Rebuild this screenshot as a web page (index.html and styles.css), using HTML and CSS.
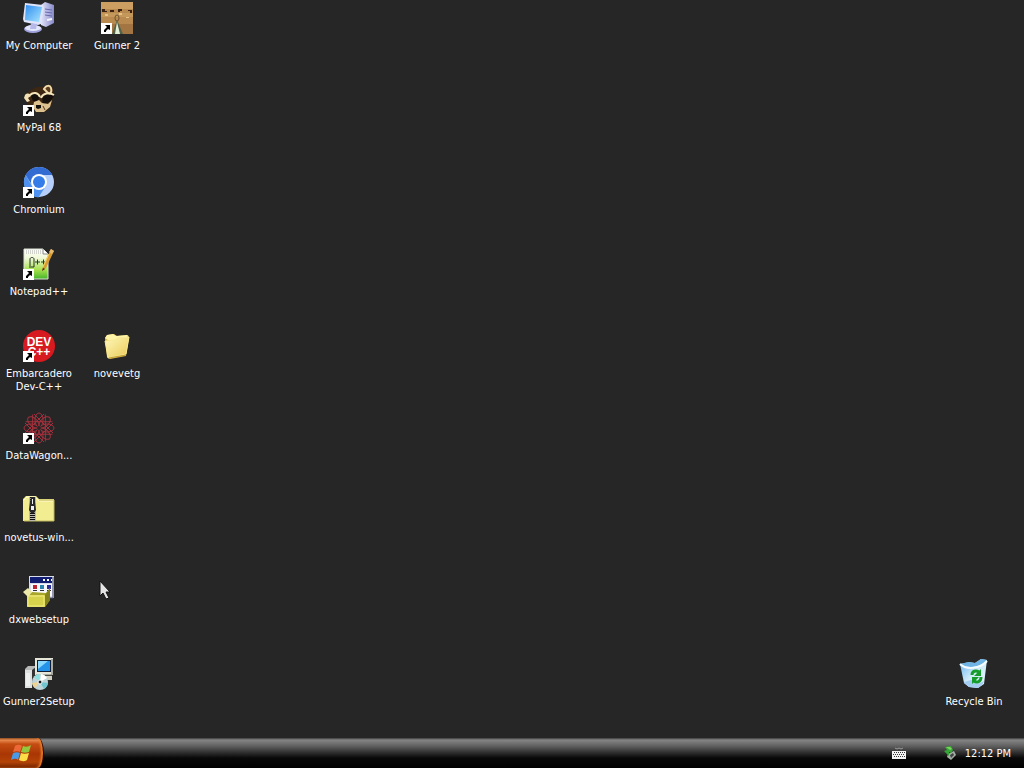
FILE: index.html
```html
<!DOCTYPE html>
<html lang="en">
<head>
	<meta charset="utf-8">
	<title>Desktop</title>
	<link rel="stylesheet" href="styles.css">
</head>
<body>
	<svg class="defs" width="0" height="0">
		<defs>
			<linearGradient id="screen" x1="0" y1="0" x2="1" y2="1">
				<stop offset="0" stop-color="#2f8df0"/>
				<stop offset="1" stop-color="#a9e6ff"/>
			</linearGradient>
			<linearGradient id="tower" x1="0" y1="0" x2="1" y2="0">
				<stop offset="0" stop-color="#e2e4fa"/>
				<stop offset="1" stop-color="#8688c8"/>
			</linearGradient>
			<linearGradient id="paper" x1="0" y1="0" x2="0" y2="1">
				<stop offset="0" stop-color="#ffffff"/>
				<stop offset="0.3" stop-color="#f1f9d8"/>
				<stop offset="0.7" stop-color="#a4e04a"/>
				<stop offset="1" stop-color="#44b52c"/>
			</linearGradient>
			<linearGradient id="manila" x1="0" y1="0" x2="1" y2="1">
				<stop offset="0" stop-color="#fff9bd"/>
				<stop offset="1" stop-color="#e9c953"/>
			</linearGradient>
			<linearGradient id="glass" x1="0" y1="0" x2="1" y2="1">
				<stop offset="0" stop-color="#5eaeee"/>
				<stop offset="0.5" stop-color="#cfeafa"/>
				<stop offset="1" stop-color="#e8f8ff"/>
			</linearGradient>
			<g id="shortcut">
				<rect x="0" y="21" width="11" height="11" fill="#fff"/>
				<path d="M4 23h5v5l-2-1-2 2v1H3v-2l3-3z" fill="#000"/>
			</g>
		</defs>
	</svg>

	<main class="desktop">
		<a href="#" class="icon">
			<svg viewBox="0 0 32 32">
				<path d="M18 3l4-3 9 3v18l-8 4-5-2z" fill="url(#tower)"/>
				<path d="M22 7l7 1M22 10l7 1M22 13l7 1" stroke="#6669ad"/>
				<path d="M24 18l5-1" stroke="#f5f6ff" stroke-width="2"/>
				<path d="M2 1l18 2 1 3-3 16-3 1L1 20 0 17z" fill="#dfe4fb"/>
				<path d="M3 3l16 2-3 15L2 18z" fill="url(#screen)"/>
				<ellipse cx="10" cy="27" rx="9" ry="4" fill="#9ea1dc"/>
				<ellipse cx="10" cy="26" rx="8" ry="3" fill="#e4e7fc"/>
				<path d="M8 21l6 1-1 5H7z" fill="#b6b9e8"/>
			</svg>
			<span>My Computer</span>
		</a>
		<a href="#" class="icon col2 row1">
			<svg viewBox="0 0 32 32">
				<rect width="32" height="32" fill="#b98a50"/>
				<path d="M0 0h32v7H0z" fill="#cc9e61"/>
				<path d="M0 11h32v4H0z" fill="#c4975b"/>
				<path d="M0 22h32v10H0z" fill="#a27543"/>
				<path d="M1 7h3v2h2v1H1zM9 8h4v2H9zM17 7h4v2h-2v1h-2zM27 8h4v3h-2V9h-2z" fill="#3a2013"/>
				<path d="M4 12h3v2H4zM18 11h3v2h-3zM25 15h3v1h-3z" fill="#e8c184"/>
				<ellipse cx="16" cy="16" rx="2" ry="3" fill="none" stroke="#705330"/>
				<path d="M16 18l6 14H11z" fill="#536349"/>
				<path d="M16 20l3 12h-5z" fill="#e5f0da"/>
				<use href="#shortcut"/>
			</svg>
			<span>Gunner 2</span>
		</a>
		<a href="#" class="icon">
			<svg viewBox="0 0 32 32">
				<path d="M2 12l4-5 8-4 8 0 5-2 3 3v8l-1 9-6 6-8 2-10-8z" fill="#3d2612"/>
				<path d="M21 5c2-4 6-4 7-1 1 3 0 5-2 6-2-2-3-3-5-5z" fill="#5a3d20" stroke="#f0daa9" stroke-width="2"/>
				<path d="M2 11c2-2 5-2 6 1l-3 2 2 3-3 1-3-4z" fill="#f3e0b4"/>
				<path d="M8 12c2-3 6-3 8 1l-1 5-5-1z" fill="#15100b"/>
				<path d="M7 11c3-3 8-3 10 2" fill="none" stroke="#f6e4ba" stroke-width="2"/>
				<path d="M19 13c4-4 8-3 12-1l-4 6-7 2z" fill="#15100b"/>
				<path d="M18 14c2-5 8-6 13-3" fill="none" stroke="#f6e4ba" stroke-width="2"/>
				<path d="M11 18l5-2 3 3 6 1 4-4-2 7-6 5h-8l-3-5z" fill="#dcc08e"/>
				<path d="M13 21h5v3l-3 1-2-1z" fill="#17110c"/>
				<path d="M20 22l2 4" stroke="#5b3d20"/>
				<use href="#shortcut"/>
			</svg>
			<span>MyPal 68</span>
		</a>
		<a href="#" class="icon">
			<svg viewBox="0 0 32 32">
				<circle cx="16" cy="16" r="15" fill="#b7d0fb"/>
				<path d="M2.5 9A15.5 15.5 0 0 1 29.5 9H16l-7 10z" fill="#326bd1"/>
				<path d="M2.5 9l7 12 12 1-6 9.5A15.5 15.5 0 0 1 2.5 9z" fill="#4e91ee"/>
				<circle cx="16" cy="16" r="8" fill="#fff"/>
				<circle cx="16" cy="16" r="6" fill="#347ce8"/>
				<use href="#shortcut"/>
			</svg>
			<span>Chromium</span>
		</a>
		<a href="#" class="icon">
			<svg viewBox="0 0 32 32">
				<path d="M1 1h19l5 5v25H1z" fill="url(#paper)" stroke="#dce2d4"/>
				<path d="M20 1v5h5" fill="#fff" stroke="#888"/>
				<path d="M3 3h15M3 5h15" stroke="#aaa" stroke-dasharray="1 1"/>
				<path d="M7 20v-9c0-2 4-2 4 0v8H8" fill="none" stroke="#26332a"/>
				<path d="M12 14h5M14.5 11.500v5M18 14h5M20.500 11.500v5" stroke="#24422b"/>
				<path d="M28 1l3 2-8 17-4 3 1-5z" fill="#d99b32"/>
				<path d="M28 1l3 2-2 3-3-2z" fill="#e4b86d"/>
				<path d="M26 6l-6 13" stroke="#f7d260"/>
				<path d="M19 23l1-3 2 1z" fill="#302b1c"/>
				<use href="#shortcut"/>
			</svg>
			<span>Notepad++</span>
		</a>
		<a href="#" class="icon">
			<svg viewBox="0 0 32 32">
				<circle cx="16" cy="16" r="16" fill="#d71920"/>
				<text class="logo-text" text-anchor="middle"><tspan x="16" y="16">DEV</tspan><tspan x="16" y="26">C++</tspan></text>
				<use href="#shortcut"/>
			</svg>
			<span>Embarcadero Dev-C++</span>
		</a>
		<a href="#" class="icon col2 row5">
			<svg viewBox="0 0 32 32">
				<path d="M4 8l2-3 7-1 3 2 11-1 1 3-3 18-16 3-3-2z" fill="#ddba4b"/>
				<path d="M4 8l2-3 6-1 3 2 11-1 1 3-17 4z" fill="#fff4a7"/>
				<path d="M4 11l10-1 3-2 11-1-3 17-18 4z" fill="url(#manila)" stroke="#f7e991"/>
				<path d="M8 28l17-3" stroke="#c19e34"/>
			</svg>
			<span>novevetg</span>
		</a>
		<a href="#" class="icon">
			<svg viewBox="0 0 32 32">
				<g fill="none" stroke="#a3303d">
					<g id="petals">
						<ellipse cx="16" cy="8" rx="4" ry="7"/>
						<ellipse cx="16" cy="24" rx="4" ry="7"/>
						<path d="M11 2l10 10M21 2L11 12M11 30l10-10M21 30L11 20"/>
					</g>
					<use href="#petals" transform="rotate(45 16 16)"/>
					<use href="#petals" transform="rotate(90 16 16)"/>
					<use href="#petals" transform="rotate(135 16 16)"/>
				</g>
				<circle cx="16" cy="16" r="2" fill="#262626"/>
				<use href="#shortcut"/>
			</svg>
			<span>DataWagon...</span>
		</a>
		<a href="#" class="icon">
			<svg viewBox="0 0 32 32">
				<path d="M0 5l3-3h10l3 3h15v22H0z" fill="#f3ed91"/>
				<path d="M1 6l3-3h8l4 4h14" fill="none" stroke="#fffbd5"/>
				<path d="M16 6h15v21H1" fill="none" stroke="#c2b85c"/>
				<path d="M6 3h7v24H6z" fill="#b9b9b0"/>
				<path d="M9.500 3v24" stroke="#111" stroke-width="5" stroke-dasharray="1 1"/>
				<path d="M8 3h4v5l1 8-2 3H8l-2-3 1-8z" fill="#26282a"/>
				<path d="M9 5h1v5H9zM8 12h3v4H8z" fill="#eee"/>
			</svg>
			<span>novetus-win...</span>
		</a>
		<a href="#" class="icon">
			<svg viewBox="0 0 32 32">
				<path d="M6 0h25v22H6z" fill="#d9dcea"/>
				<path d="M30 1v21H18" fill="none" stroke="#485171"/>
				<path d="M7 1h22v6H7z" fill="#101d72"/>
				<path d="M20 3h2v2h-2zM24 3h2v2h-2zM28 3h1v2h-1z" fill="#fff"/>
				<path d="M8 8h21v12H8z" fill="#f7f8ff"/>
				<path d="M10 9h4v4h-4z" fill="#ba2431"/>
				<path d="M17 9h4v4h-4z" fill="#2b83ae"/>
				<path d="M24 9h4v4h-4z" fill="#2b2d95"/>
				<path d="M10 14.500h4M17 14.500h4M24 14.500h4" stroke="#333"/>
				<path d="M4 19l5-3 14 1 4-5v12l-5 7H4z" fill="#a9a72b"/>
				<path d="M4 19h18v12H4z" fill="#d6d24c"/>
				<path d="M5 20h16v10H5z" fill="none" stroke="#f1ed87"/>
				<path d="M22 19l5-7v12l-5 7z" fill="#85831d"/>
				<path d="M0 16l5-4 4 4-4 5z" fill="#ece9a8"/>
			</svg>
			<span>dxwebsetup</span>
		</a>
		<a href="#" class="icon">
			<svg viewBox="0 0 32 32">
				<path d="M2 11l3-3h8v22H2z" fill="#b7b9b9"/>
				<path d="M2 12h7v18H2z" fill="#dedfdf"/>
				<path d="M9 12l4-3v21H9z" fill="#333"/>
				<path d="M4 15v13M6 15v13" stroke="#fff"/>
				<path d="M12 0h18v17H12z" fill="#e5e5d8"/>
				<path d="M29 1v16H13" fill="none" stroke="#707069"/>
				<path d="M14 2h14v12H14z" fill="#101d35"/>
				<path d="M15 3h12v10H15z" fill="#2493e9"/>
				<path d="M15 3h10l-10 8z" fill="#8ad8ff"/>
				<path d="M14 18h15v4H14z" fill="#d2d0c2"/>
				<circle cx="17" cy="24" r="8" fill="#bfd4d8"/>
				<path d="M17 24l-6-5a8 8 0 0 1 5-3z" fill="#8de0df"/>
				<path d="M17 24l1-8a8 8 0 0 1 6 4z" fill="#fff"/>
				<path d="M17 24l8 1a8 8 0 0 1-4 6z" fill="#6fc4cf"/>
				<path d="M17 24l-5 6a8 8 0 0 1-3-5z" fill="#edd491"/>
				<circle cx="17" cy="24" r="2" fill="#171717" stroke="#fff"/>
			</svg>
			<span>Gunner2Setup</span>
		</a>
		<a href="#" class="icon bin">
			<svg viewBox="0 0 32 32">
				<path d="M2 6l9-2 6 1 6-4 6 1-3 24-6 4-9-1-5-4z" fill="url(#glass)"/>
				<path d="M2 6c6 5 20 4 27-4l-6-1-6 4-6-1z" fill="#6fb4e4"/>
				<path d="M2 6c6 6 20 5 27-3" fill="none" stroke="#f4fcff" stroke-width="2"/>
				<path d="M6 24l7-2 7 4 6-3-1 3-5 4-9-1-5-4z" fill="#a4cdf1"/>
				<g fill="none" stroke="#159c2b" stroke-width="3">
					<path d="M14 17c0-4 4-5 7-3"/>
					<path d="M23 19c0 5-4 6-7 4"/>
				</g>
				<path d="M23 11v7h-7zM14 26v-7h7z" fill="#159c2b"/>
			</svg>
			<span>Recycle Bin</span>
		</a>
	</main>

	<footer class="taskbar">
		<button class="start" aria-label="Start">
			<svg viewBox="0 0 20 20">
				<path d="M4 3c3-2 5-1 7 0L9 9C7 8 5 8 2 9z" fill="#ed6737"/>
				<path d="M12 3c3 1 5 1 8-1l-2 7c-3 1-5 1-8 0z" fill="#91c83e"/>
				<path d="M2 10c3-1 5-1 7 0l-2 7c-2-2-4-1-7 0z" fill="#4a9ae8"/>
				<path d="M10 10c2 1 5 1 8 0l-2 7c-3 2-6 1-8 0z" fill="#ffdd47"/>
			</svg>
		</button>
		<div class="tray">
			<svg class="keyboard" viewBox="0 0 16 16">
				<path d="M4 3l2 1 2-1 2 1 2-1" fill="none" stroke="#999"/>
				<path d="M1 6h14v8H1z" fill="#f2f2f2"/>
				<path d="M3 7.500h11M2 9.500h11M3 11.500h11" stroke="#333" stroke-dasharray="1 1"/>
			</svg>
			<svg class="device" viewBox="0 0 16 16">
				<path d="M5 9l6-3 2 4-5 5-4-3z" fill="#a6afa6"/>
				<path d="M7 10l3-2 1 2-3 3z" fill="#444"/>
				<path d="M2 2l6-1 2 4-2 3-2-1v4L1 6l3-1z" fill="#35a635"/>
				<path d="M3 2l4 0 2 2-2 1z" fill="#78d45d"/>
			</svg>
			<time>12:12 PM</time>
		</div>
	</footer>

	<svg class="pointer" viewBox="0 0 12 20">
		<path d="M1 1v15l3-3 3 6 3-1-3-6h4z" fill="#e4e4e4" stroke="#111"/>
	</svg>
</body>
</html>
```

FILE: styles.css
```css
body{
	margin: 0;
	min-height: 100vh;
	display: flex;
	flex-direction: column;
	background: #262626;
	color: #fff;
	font-family: "DejaVu Sans Condensed", "Noto Sans", sans-serif;
	font-size: 11px;
	line-height: 13px;
}

.defs{
	position: absolute;
}

.desktop{
	flex: 1;
	display: grid;
	grid-template-columns: 78px 78px 1fr 78px;
	grid-auto-rows: 82px;
	padding-right: 11px;
}

.icon{
	grid-column: 1;
	display: flex;
	flex-direction: column;
	align-items: center;
	gap: 5px;
	padding-top: 2px;
	color: #fff;
	text-align: center;
	text-decoration: none;
}

.icon svg{
	width: 32px;
	height: 32px;
}

.col2{
	grid-column: 2;
}

.row1{
	grid-row: 1;
}

.row5{
	grid-row: 5;
}

.bin{
	grid-column: 4;
	grid-row: 9;
}

.logo-text{
	fill: #fff;
	font-family: "Liberation Sans", sans-serif;
	font-size: 12px;
	font-weight: bold;
}

/* taskbar */
.taskbar{
	height: 30px;
	display: flex;
	justify-content: space-between;
	background: linear-gradient(#3c3c3c 0, #858585 2px, #606060 8px, #2c2c2c 15px, #080808 20px, #000 100%);
}

.start{
	width: 44px;
	padding: 0 0 0 11px;
	display: flex;
	align-items: center;
	border: 0;
	border-right: 1px solid #2d0a00;
	border-radius: 0 6px 6px 0 / 0 15px 15px 0;
	background: linear-gradient(#6d3a1c 0, #e98b50 2px, #c44d12 6px, #a93604 16px, #b34306 24px, #702200 100%);
	box-shadow: inset -2px 0 2px #e57c2c;
}

.start svg{
	width: 20px;
	height: 20px;
}

.tray{
	display: flex;
	align-items: center;
	padding-right: 13px;
}

.tray svg{
	width: 16px;
	height: 16px;
}

.keyboard{
	margin-right: 36px;
}

.device{
	margin-right: 6px;
}

.pointer{
	position: absolute;
	left: 99px;
	top: 580px;
	width: 12px;
	height: 20px;
}
```
